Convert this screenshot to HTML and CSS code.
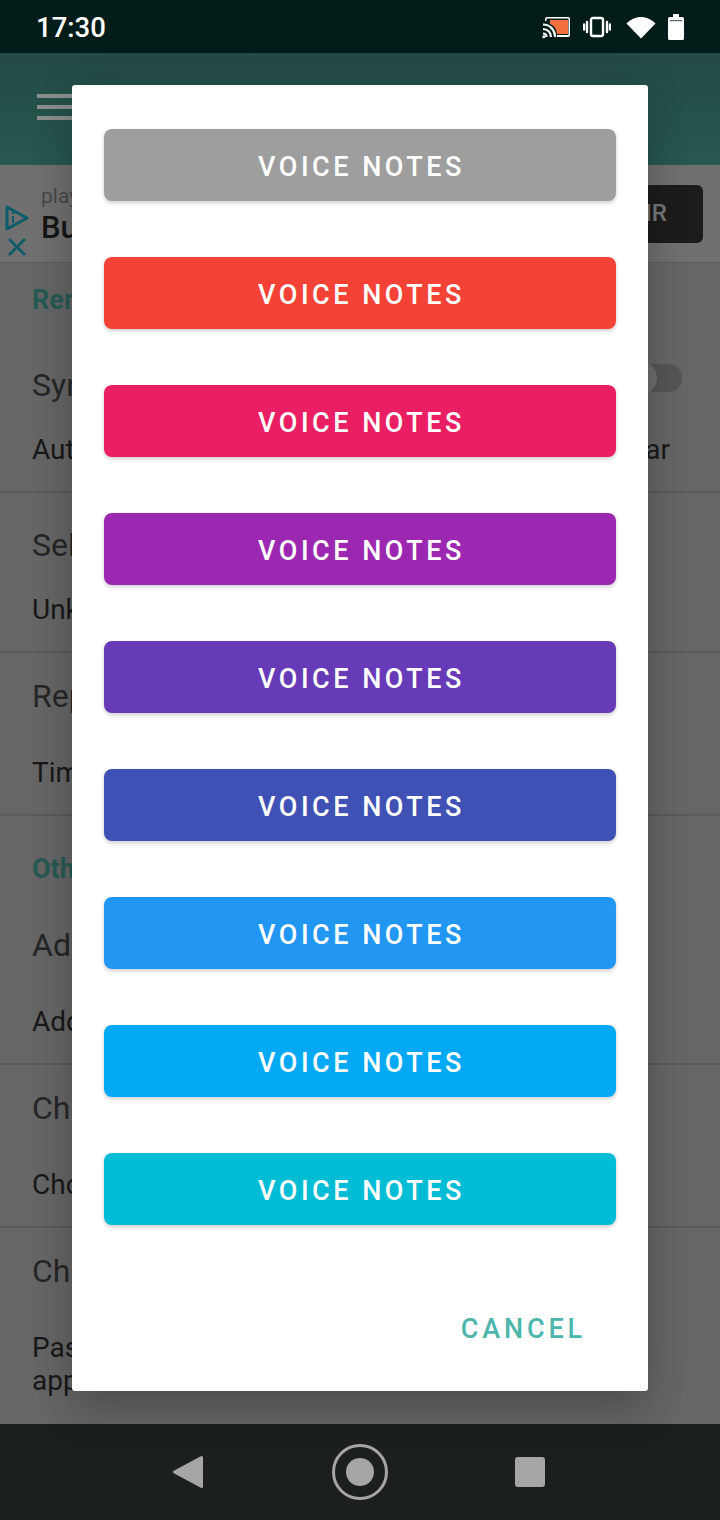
FILE: index.html
```html
<!DOCTYPE html>
<html>
<head>
    <title>Settings</title>
    <link rel="stylesheet" href="styles.css">
</head>
<body>
    <div class="screen">
        <div class="status-bar">
            <span class="clock">17:30</span>
            <div class="status-icons">
                <svg class="icon-cast" width="30" height="24" viewBox="0 0 30 24">
                    <path d="M8 5h18v14H15c-.5-5.500-3.500-9-7-10z" fill="#f4703f"/>
                    <path d="M3 6V4a2 2 0 0 1 2-2h21a2 2 0 0 1 2 2v16a2 2 0 0 1-2 2H15V20h11.500V3.500H4.500V6z" fill="#fff"/>
                    <path d="M1 9.500c7 0 12 5.500 12 12.500M1 14c4.500 0 8 3.500 8 8M1 18.500c2 0 3.500 1.500 3.500 3.500" fill="none" stroke="#fff" stroke-width="2.200"/>
                    <circle cx="1.800" cy="21.800" r="1.500" fill="#fff"/>
                </svg>
                <svg class="icon-vibrate" width="28" height="24" viewBox="0 0 28 24">
                    <rect x="8" y="3" width="12" height="18" rx="2" fill="none" stroke="#fff" stroke-width="2.400"/>
                    <path d="M4 7v10M1 9.500v5M24 7v10M27 9.500v5" stroke="#fff" stroke-width="2.400" stroke-linecap="round"/>
                </svg>
                <svg class="icon-wifi" width="30" height="24" viewBox="0 0 30 24">
                    <path d="M15 23.500L.5 8.500C4.500 4.500 9.500 2 15 2s10.500 2.500 14.500 6.500z" fill="#fff"/>
                </svg>
                <svg class="icon-battery" width="16" height="26" viewBox="0 0 16 26">
                    <path d="M5 0h6v3h3.500a1.500 1.500 0 0 1 1.500 1.500v20a1.500 1.500 0 0 1-1.500 1.500h-13A1.500 1.500 0 0 1 0 24.500v-20A1.500 1.500 0 0 1 1.500 3H5z" fill="#fff"/>
                    <rect x="2" y="6" width="12" height="1.200" fill="#5d6b69"/>
                </svg>
            </div>
        </div>

        <div class="toolbar">
            <div class="menu-icon"><span></span><span></span><span></span></div>
        </div>

        <div class="ad-banner">
            <div class="ad-icons">
                <svg width="24" height="26" viewBox="0 0 24 26">
                    <path d="M2 2l20 11L2 24z" fill="none" stroke="#0c5c6a" stroke-width="3" stroke-linejoin="round"/>
                    <path d="M8 11v7" stroke="#0c5c6a" stroke-width="2"/>
                    <circle cx="8" cy="8" r="1.200" fill="#0c5c6a"/>
                </svg>
                <svg width="20" height="20" viewBox="0 0 20 20">
                    <path d="M2 2l16 16M18 2L2 18" stroke="#0c5c6a" stroke-width="2.800"/>
                </svg>
            </div>
            <div class="ad-text">
                <div class="ad-domain">play.google.com</div>
                <div class="ad-title">Buscar</div>
            </div>
            <div class="ad-button">IR</div>
        </div>

        <div class="settings">
            <div class="section section-first">Reminders</div>
            <div class="row row-sync">
                <div class="row-title">
                    <span>Sync</span>
                    <div class="toggle"></div>
                </div>
                <div class="row-sub row-split">
                    <span>Auto</span>
                    <span>calendar</span>
                </div>
            </div>
            <div class="row row-select">
                <div class="row-title">Select</div>
                <div class="row-sub">Unknown</div>
            </div>
            <div class="row">
                <div class="row-title">Repeat</div>
                <div class="row-sub">Time</div>
            </div>
            <div class="section">Other</div>
            <div class="row">
                <div class="row-title">Add</div>
                <div class="row-sub">Add</div>
            </div>
            <div class="row">
                <div class="row-title">Change</div>
                <div class="row-sub">Choose</div>
            </div>
            <div class="row row-last">
                <div class="row-title">Change</div>
                <div class="row-sub">Password<br>app</div>
            </div>
        </div>

        <div class="nav-bar">
            <svg width="32" height="34" viewBox="0 0 32 34">
                <path d="M28.500 2.500L1.500 17l27 14.500z" fill="#a4a6a7" stroke="#a4a6a7" stroke-width="3" stroke-linejoin="round"/>
            </svg>
            <svg width="58" height="58" viewBox="0 0 58 58">
                <circle cx="29" cy="29" r="26.500" fill="none" stroke="#a4a6a7" stroke-width="3"/>
                <circle cx="29" cy="29" r="14" fill="#a4a6a7"/>
            </svg>
            <div class="nav-square"></div>
        </div>

        <div class="dialog">
            <div class="color-btn btn-grey">VOICE NOTES</div>
            <div class="color-btn btn-red">VOICE NOTES</div>
            <div class="color-btn btn-pink">VOICE NOTES</div>
            <div class="color-btn btn-purple">VOICE NOTES</div>
            <div class="color-btn btn-deep-purple">VOICE NOTES</div>
            <div class="color-btn btn-indigo">VOICE NOTES</div>
            <div class="color-btn btn-blue">VOICE NOTES</div>
            <div class="color-btn btn-light-blue">VOICE NOTES</div>
            <div class="color-btn btn-cyan">VOICE NOTES</div>
            <div class="dialog-actions">
                <span class="cancel">CANCEL</span>
            </div>
        </div>
    </div>
</body>
</html>
```

FILE: styles.css
```css
body {
    margin: 0;
    font-family: Roboto, "Liberation Sans", sans-serif;
}
.screen {
    position: relative;
    width: 720px;
    height: 1520px;
    overflow: hidden;
    display: flex;
    flex-direction: column;
    background-color: #666;
}

/* status bar */
.status-bar {
    height: 53px;
    flex: none;
    display: flex;
    align-items: center;
    justify-content: space-between;
    padding: 0 36px 0 36px;
    background-color: #021c19;
}
.clock {
    margin-top: 2px;
    color: #fff;
    font-size: 27.5px;
    font-weight: 500;
}
.status-icons {
    display: flex;
    align-items: center;
}
.icon-cast {
    margin-right: 11px;
}
.icon-vibrate {
    margin-right: 15px;
}
.icon-wifi {
    margin-right: 12px;
}

/* toolbar */
.toolbar {
    height: 112px;
    flex: none;
    display: flex;
    align-items: center;
    padding-left: 37px;
    box-sizing: border-box;
    background: linear-gradient(#234a46, #27584f);
}
.menu-icon {
    width: 36px;
    display: flex;
    flex-direction: column;
    gap: 7px;
    margin-bottom: 4px;
}
.menu-icon span {
    height: 4px;
    background-color: #8a8f8d;
}

/* ad */
.ad-banner {
    height: 98px;
    flex: none;
    box-sizing: border-box;
    display: flex;
    align-items: center;
    padding: 0 17px 0 5px;
    background-color: #707070;
    border-bottom: 1px solid #5e5e5e;
}
.ad-icons {
    width: 36px;
    display: flex;
    flex-direction: column;
    gap: 6px;
    margin-top: 34px;
}
.ad-icons svg:last-child {
    margin-left: 2px;
}
.ad-text {
    flex: 1;
    padding-top: 2px;
}
.ad-domain {
    color: #484848;
    font-size: 21px;
    line-height: 26px;
}
.ad-title {
    color: #161616;
    font-size: 31px;
    font-weight: 500;
    line-height: 38px;
}
.ad-button {
    width: 94px;
    height: 58px;
    line-height: 56px;
    text-align: center;
    color: #777;
    font-size: 24px;
    font-weight: 500;
    border-radius: 6px;
    background-color: #1c1c1c;
}

/* settings list */
.settings {
    flex: 1;
    overflow: hidden;
}
.section {
    padding: 36px 0 16px 32px;
    color: #265a53;
    font-size: 27px;
    font-weight: 700;
    line-height: 34px;
}
.section-first {
    padding-top: 20px;
    padding-bottom: 13px;
}
.row {
    height: 163px;
    box-sizing: border-box;
    padding: 25px 38px 0 32px;
    border-bottom: 2px solid #5a5a5a;
}
.row-sync {
    padding-top: 37px;
}
.row-select {
    height: 160px;
    padding-top: 34px;
}
.row-last {
    border-bottom: none;
}
.row-title {
    display: flex;
    align-items: center;
    justify-content: space-between;
    height: 36px;
    color: #262626;
    font-size: 32px;
    line-height: 36px;
    margin-bottom: 42px;
}
.row-sync .row-title,
.row-select .row-title {
    margin-bottom: 30px;
}
.row-sub {
    color: #191919;
    font-size: 28px;
    line-height: 33px;
    white-space: nowrap;
}
.row-split {
    display: flex;
    justify-content: space-between;
    margin-right: 12px;
}
.toggle {
    position: relative;
    width: 44px;
    height: 28px;
    margin-bottom: 14px;
    border-radius: 14px;
    background-color: #565656;
}
.toggle::before {
    content: "";
    position: absolute;
    left: -15px;
    top: -3px;
    width: 34px;
    height: 34px;
    border-radius: 50%;
    background-color: #6e6e6e;
}

/* nav bar */
.nav-bar {
    height: 96px;
    flex: none;
    display: flex;
    align-items: center;
    justify-content: space-between;
    box-sizing: border-box;
    padding: 0 175px 0 173px;
    background-color: #1b1f20;
}
.nav-square {
    width: 30px;
    height: 30px;
    border-radius: 3px;
    background-color: #a4a6a7;
}

/* colour dialog */
.dialog {
    position: absolute;
    left: 72px;
    top: 85px;
    width: 576px;
    height: 1306px;
    box-sizing: border-box;
    padding: 44px 32px 0;
    display: flex;
    flex-direction: column;
    gap: 56px;
    border-radius: 3px;
    background-color: #fff;
    box-shadow: 0 24px 38px rgba(0, 0, 0, 0.14), 0 9px 46px rgba(0, 0, 0, 0.12);
}
.color-btn {
    height: 72px;
    flex: none;
    box-sizing: border-box;
    padding: 2px 0 0 3px;
    line-height: 72px;
    text-align: center;
    color: #fff;
    font-size: 27px;
    font-weight: 500;
    letter-spacing: 3.5px;
    border-radius: 8px;
    box-shadow: 0 2px 4px rgba(0, 0, 0, 0.2);
}
.btn-grey { background-color: #9e9e9e; }
.btn-red { background-color: #f44336; }
.btn-pink { background-color: #e91e63; }
.btn-purple { background-color: #9c27b0; }
.btn-deep-purple { background-color: #673ab7; }
.btn-indigo { background-color: #3f51b5; }
.btn-blue { background-color: #2196f3; }
.btn-light-blue { background-color: #03a9f4; }
.btn-cyan { background-color: #00bcd4; }
.dialog-actions {
    display: flex;
    justify-content: flex-end;
    padding-right: 30px;
    margin-top: 31px;
}
.cancel {
    color: #4db6ac;
    font-size: 27px;
    font-weight: 500;
    letter-spacing: 3.86px;
    line-height: 34px;
}
```
